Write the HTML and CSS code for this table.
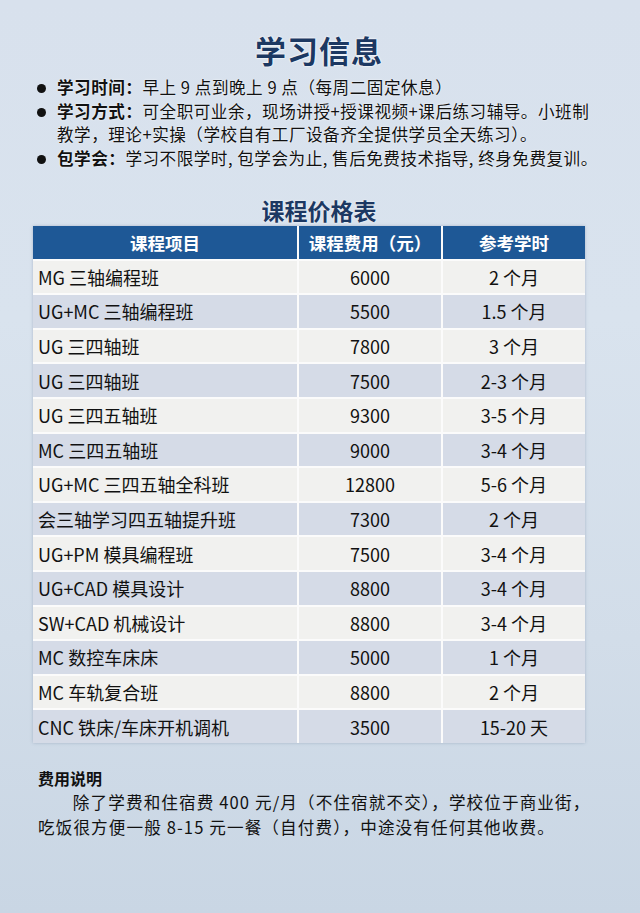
FILE: index.html
```html
<!DOCTYPE html>
<html lang="zh">
<head>
<meta charset="utf-8">
<link rel="stylesheet" href="styles.css">
</head>
<body>
<div class="page">
  <h1 class="title">学习信息</h1>
  <ul class="info">
    <li><b>学习时间：</b>早上 9 点到晚上 9 点（每周二固定休息）</li>
    <li><b>学习方式：</b>可全职可业余，现场讲授+授课视频+课后练习辅导。小班制教学，理论+实操（学校自有工厂设备齐全提供学员全天练习）。</li>
    <li><b>包学会：</b>学习不限学时, 包学会为止, 售后免费技术指导, 终身免费复训。</li>
  </ul>
  <h2 class="subtitle">课程价格表</h2>
  <div class="table">
    <div class="th">课程项目</div><div class="th">课程费用（元）</div><div class="th">参考学时</div>
    <div class="td name">MG 三轴编程班</div><div class="td">6000</div><div class="td">2 个月</div>
    <div class="td name alt">UG+MC 三轴编程班</div><div class="td alt">5500</div><div class="td alt">1.5 个月</div>
    <div class="td name">UG 三四轴班</div><div class="td">7800</div><div class="td">3 个月</div>
    <div class="td name alt">UG 三四轴班</div><div class="td alt">7500</div><div class="td alt">2-3 个月</div>
    <div class="td name">UG 三四五轴班</div><div class="td">9300</div><div class="td">3-5 个月</div>
    <div class="td name alt">MC 三四五轴班</div><div class="td alt">9000</div><div class="td alt">3-4 个月</div>
    <div class="td name">UG+MC 三四五轴全科班</div><div class="td">12800</div><div class="td">5-6 个月</div>
    <div class="td name alt">会三轴学习四五轴提升班</div><div class="td alt">7300</div><div class="td alt">2 个月</div>
    <div class="td name">UG+PM 模具编程班</div><div class="td">7500</div><div class="td">3-4 个月</div>
    <div class="td name alt">UG+CAD 模具设计</div><div class="td alt">8800</div><div class="td alt">3-4 个月</div>
    <div class="td name">SW+CAD 机械设计</div><div class="td">8800</div><div class="td">3-4 个月</div>
    <div class="td name alt">MC 数控车床床</div><div class="td alt">5000</div><div class="td alt">1 个月</div>
    <div class="td name">MC 车轨复合班</div><div class="td">8800</div><div class="td">2 个月</div>
    <div class="td name alt">CNC 铁床/车床开机调机</div><div class="td alt">3500</div><div class="td alt">15-20 天</div>
  </div>
  <div class="note">
    <div class="note-title">费用说明</div>
    <p class="note-text">除了学费和住宿费 400 元/月（不住宿就不交），学校位于商业街，吃饭很方便一般 8-15 元一餐（自付费），中途没有任何其他收费。</p>
  </div>
</div>
</body>
</html>
```

FILE: styles.css
```css
* { box-sizing: border-box; }
html, body { margin: 0; padding: 0; }
body {
  width: 640px;
  height: 913px;
  overflow: hidden;
  font-family: "Noto Sans CJK SC", "Noto Sans", sans-serif;
  color: #111;
  background: linear-gradient(180deg, #d8e1ed 0%, #d9e3ee 35%, #d2dde9 70%, #c9d6e4 100%);
}
.page {
  padding: 30px 35px 0 33px;
}
.title {
  margin: 0;
  text-align: center;
  font-size: 31px;
  line-height: 40px;
  font-weight: 700;
  color: #1c3862;
  text-shadow: 0 0 2px #fff, 0 0 2px #fff;
  letter-spacing: 1px;
}
.info {
  list-style: none;
  margin: 6px 0 0;
  padding: 0 0 0 24px;
  font-size: 16.6px;
  line-height: 23.5px;
  letter-spacing: 0.5px;
  text-shadow: 0 0 2px #fff;
}
.info li {
  position: relative;
}
.info li::before {
  content: "";
  position: absolute;
  left: -20px;
  top: 8px;
  width: 9px;
  height: 9px;
  border-radius: 50%;
  background: #111;
}
.info b { font-weight: 700; }
.subtitle {
  margin: 25px 0 1px;
  text-align: center;
  font-size: 23px;
  line-height: 30px;
  font-weight: 700;
  color: #1c3862;
  text-shadow: 0 0 2px #fff;
}
.table {
  display: grid;
  grid-template-columns: 264px 142px 1fr;
  grid-auto-rows: 32.6px;
  gap: 2px 2px;
  background: #fbfbfb;
  width: 552px;
  box-shadow: 0 0 3px rgba(90, 110, 140, 0.35);
}
.th {
  background: #1e5896;
  color: #fff;
  font-weight: 700;
  font-size: 17.5px;
  display: flex;
  align-items: center;
  justify-content: center;
}
.td {
  background: #f1f1ef;
  font-size: 18px;
  display: flex;
  align-items: center;
  justify-content: center;
  color: #111;
}
.td.alt { background: #d5dbe7; }
.td.name {
  justify-content: flex-start;
  padding-left: 5px;
}
.note {
  margin-top: 24px;
  padding-left: 5px;
}
.note-title {
  font-weight: 700;
  font-size: 16px;
  line-height: 23px;
}
.note-text {
  margin: 0;
  font-size: 16.6px;
  line-height: 25px;
  letter-spacing: 1.1px;
  text-indent: 2.1em;
}
```
